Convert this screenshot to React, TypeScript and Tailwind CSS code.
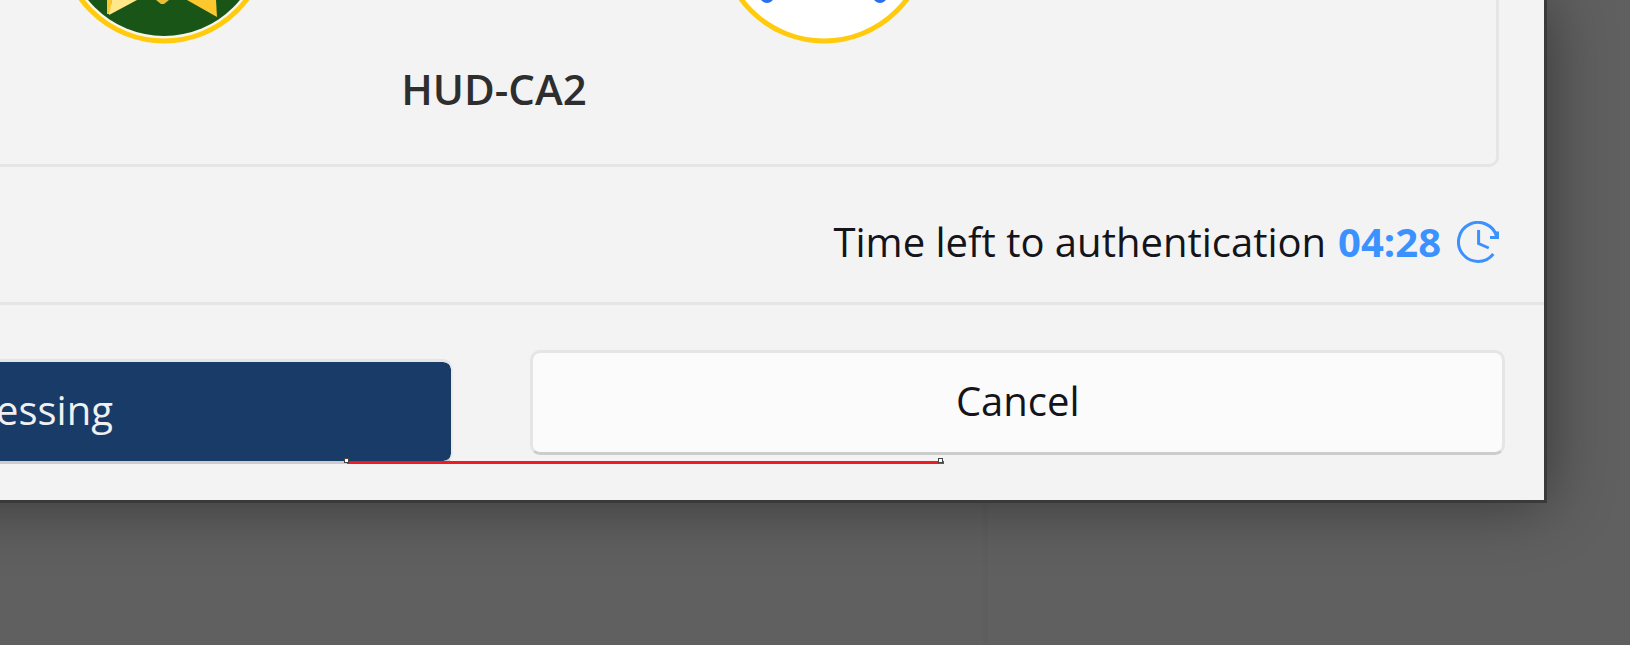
import React from 'react';

interface TimerProps {
    label: string;
    value: string;
}

function CrestLogo() {
    return (
        <svg width="212" height="44" viewBox="0 0 212 44" fill="none" aria-hidden="true">
            <circle cx="106" cy="-62" r="103" fill="#f8f6ea" stroke="#ffcb0c" strokeWidth="5" />
            <circle cx="106" cy="-62" r="98" fill="#185516" />
            <path d="M49 0H54L52 14H49Z" fill="#fcc82e" />
            <path d="M54 0H79L51 15Z" fill="#ffe88a" />
            <path d="M129 0H158L159 17Z" fill="#fcc82e" />
            <path d="M98 0H111L106 4H103Z" fill="#e9bd35" />
        </svg>
    );
}

function DotsLogo() {
    return (
        <svg width="212" height="44" viewBox="0 0 212 44" fill="none" aria-hidden="true">
            <circle cx="106" cy="-62" r="103" fill="#ffffff" stroke="#ffcb0c" strokeWidth="5" />
            <circle cx="49" cy="-4" r="7" fill="#2a6ff0" />
            <circle cx="162" cy="-4" r="7" fill="#2a6ff0" />
        </svg>
    );
}

function ClockIcon() {
    return (
        <svg className="h-[42px] w-[42px]" viewBox="0 0 14 14" fill="none" stroke="currentColor" aria-hidden="true">
            <path d="M12.1 11A6.5 6.5 0 1 1 13.25 5.2" />
            <path d="M13.5 3.5V5.5H11" />
            <path d="M7.2 3V7.5L10.6 9" />
        </svg>
    );
}

function Timer({ label, value }: TimerProps) {
    return (
        <div className="flex items-center justify-end pr-[45px] text-[40px] leading-[48px] text-[#14141a]">
            <span>{label}</span>
            <span className="ml-3 font-bold text-[#3b92ff]">{value}</span>
            <span className="ml-4 text-[#3b92ff]">
                <ClockIcon />
            </span>
        </div>
    );
}

export default function App() {
    return (
        <div className="relative min-h-screen overflow-hidden bg-[#606060] pr-[83px] font-['Open_Sans','Noto_Sans',sans-serif]">
            {/* Pane edge of the dimmed window behind the dialog */}
            <div className="absolute inset-y-0 left-[983px] w-[5px] bg-[#5c5f5e]"></div>

            {/* The dialog runs off the left edge, so its shadow has no corner there */}
            <div
                role="dialog"
                aria-label="Authentication"
                className="relative -ml-20 border-r-3 border-b-3 border-[#3a3a3a] bg-[#f3f3f3] pl-20 shadow-[0_0_60px_rgba(0,0,0,0.44)]"
            >
                {/* Certificate panel */}
                <div className="mr-[45px] rounded-br-[10px] border-r-3 border-b-3 border-[#e5e5e5] pb-[51px]">
                    <div className="ml-[58px] flex w-[872px] flex-col items-center">
                        <div className="flex w-full justify-between">
                            <CrestLogo />
                            <DotsLogo />
                        </div>
                        <h2 className="mt-5 text-[42px] leading-[49px] font-semibold text-[#2e2e2e]">HUD-CA2</h2>
                    </div>
                </div>

                <div className="-ml-20 border-b-3 border-[#e5e5e5] pt-[51px] pb-9">
                    <Timer label="Time left to authentication" value="04:28" />
                </div>

                {/* Actions */}
                <div className="relative mt-[45px] flex h-[114px] gap-[77px] pr-[39px] text-[40px] leading-[48px]">
                    <button
                        type="button"
                        aria-label="Processing"
                        className="h-[105px] flex-[454] self-end rounded-r-[10px] border-t-3 border-r-2 border-b-3 border-t-[#e5e5e5] border-r-[#ebebeb] border-b-[#cccccc] bg-[#183b67] bg-clip-padding pb-1 text-left -indent-1 text-[#f0f0f0]"
                    >
                        essing
                    </button>
                    <button
                        type="button"
                        className="h-[105px] flex-[974] self-start rounded-[10px] border-3 border-[#e5e5e5] border-b-[#cccccc] bg-[#fbfbfb] pb-1 text-[#14141a]"
                    >
                        Cancel
                    </button>

                    {/* Marker line with its two handles */}
                    <div className="absolute bottom-0 left-[347px] h-[3px] w-[597px] bg-[#f01b22]">
                        <span className="absolute -left-[3px] bottom-px h-[5px] w-[5px] border border-[#444444] bg-white"></span>
                        <span className="absolute right-px bottom-px h-[5px] w-[5px] border border-[#444444] bg-white"></span>
                    </div>
                </div>
                <div className="h-9"></div>
            </div>
        </div>
    );
}
